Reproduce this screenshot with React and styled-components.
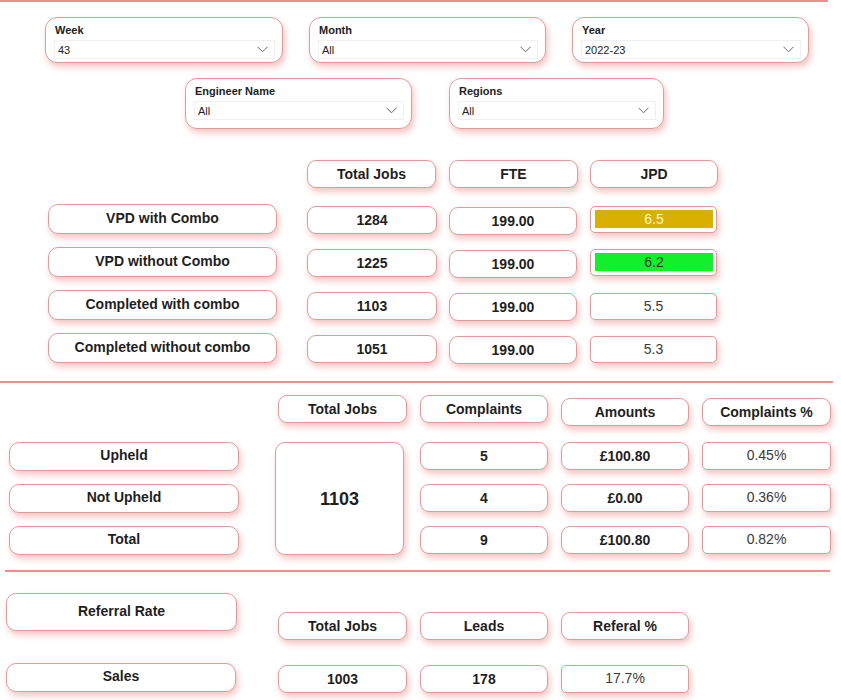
import React from 'react'
import styled, { createGlobalStyle, css } from 'styled-components'

const GlobalStyle = createGlobalStyle`
  body {
    margin: 0;
    background: #ffffff;
    font-family: "Liberation Sans", Arial, sans-serif;
    color: #1f1f1f;
  }
`

const pinkBox = css`
  background: #ffffff;
  border: 1px solid #e09a9a;
  box-shadow: 2px 4px 6px rgba(228, 110, 110, 0.4);
  box-sizing: border-box;
`

const Page = styled.div`
  width: 841px;
  height: 700px;
  overflow: hidden;
`

const Rule = styled.div`
  height: 0;
  border-top: 2px solid #ec8f8f;
  margin-left: ${p => p.$left || 0}px;
  margin-top: ${p => p.$top || 0}px;
  width: ${p => p.$width}px;
`

const SlicerRow = styled.div`
  display: flex;
  gap: ${p => p.$gap}px;
  padding-left: ${p => p.$left}px;
  margin-top: ${p => p.$top}px;
`

const Slicer = styled.div`
  ${pinkBox}
  width: ${p => p.$w}px;
  height: ${p => p.$h}px;
  border-radius: 12px;
  padding: 5px 7px 0 8px;
`

const SlicerLabel = styled.div`
  font-size: 11px;
  font-weight: bold;
  color: #222;
  padding-left: 1px;
  height: 17px;
  line-height: 14px;
`

const Dropdown = styled.div`
  display: flex;
  align-items: center;
  justify-content: space-between;
  height: 17px;
  border: 1px solid #f0f0f0;
  padding: 0 6px 0 3px;
  font-size: 11px;
  color: #252423;
`

const Chevron = () => (
  <svg width="11" height="7" viewBox="0 0 11 7">
    <path d="M0.5 0.8 L5.5 5.8 L10.5 0.8" fill="none" stroke="#666" strokeWidth="1" />
  </svg>
)

const Grid = styled.div`
  display: grid;
  grid-template-columns: ${p => p.$cols};
  grid-template-rows: ${p => p.$rows};
  column-gap: 13px;
  row-gap: ${p => p.$rowGap}px;
  padding-left: ${p => p.$left}px;
  margin-top: ${p => p.$top}px;
`

const Card = styled.div`
  ${pinkBox}
  display: flex;
  align-items: center;
  justify-content: center;
  width: ${p => p.$w || 129}px;
  height: ${p => p.$h || 28}px;
  margin-top: ${p => p.$dy || 0}px;
  margin-left: ${p => p.$dx || 0}px;
  border-radius: 9px;
  font-size: 14px;
  font-weight: bold;
  color: #1f1f1f;
  align-self: ${p => p.$align || 'start'};
`

const Label = styled(Card)`
  border-radius: 10px;
  padding-bottom: 3px;
`

const Plain = styled(Card)`
  font-weight: normal;
  color: #3a3a3a;
  border-radius: 5px;
  padding-bottom: 2px;
`

const Flag = styled(Card)`
  border-radius: 5px;
  padding: 3px 3px 4px 4px;
`

const Fill = styled.div`
  flex: 1;
  align-self: stretch;
  display: flex;
  align-items: center;
  justify-content: center;
  background: ${p => p.$bg};
  color: ${p => p.$fg};
  font-weight: normal;
  font-size: 14px;
  padding-bottom: 1px;
`

const BigCard = styled(Card)`
  grid-row: 2 / span 3;
  height: 113px;
  font-size: 18px;
  border-radius: 10px;
  padding-top: 2px;
`

const Blank = styled.div``

const slicers1 = [
  { label: 'Week', value: '43', w: 238 },
  { label: 'Month', value: 'All', w: 237 },
  { label: 'Year', value: '2022-23', w: 237 }
]

const slicers2 = [
  { label: 'Engineer Name', value: 'All', w: 227 },
  { label: 'Regions', value: 'All', w: 215 }
]

const vpdRows = [
  { name: 'VPD with Combo', jobs: '1284', fte: '199.00', jpd: '6.5', bg: '#d9b000', fg: '#fff6d0' },
  { name: 'VPD without Combo', jobs: '1225', fte: '199.00', jpd: '6.2', bg: '#12f02c', fg: '#1e3a1e' },
  { name: 'Completed with combo', jobs: '1103', fte: '199.00', jpd: '5.5' },
  { name: 'Completed without combo', jobs: '1051', fte: '199.00', jpd: '5.3' }
]

const complaintRows = [
  { name: 'Upheld', count: '5', amount: '£100.80', pct: '0.45%' },
  { name: 'Not Upheld', count: '4', amount: '£0.00', pct: '0.36%' },
  { name: 'Total', count: '9', amount: '£100.80', pct: '0.82%' }
]

export default function App() {
  return (
    <Page>
      <GlobalStyle />
      <Rule $width={828} />

      <SlicerRow $gap={26} $left={45} $top={15}>
        {slicers1.map(s => (
          <Slicer key={s.label} $w={s.w} $h={46}>
            <SlicerLabel>{s.label}</SlicerLabel>
            <Dropdown>
              <span>{s.value}</span>
              <Chevron />
            </Dropdown>
          </Slicer>
        ))}
      </SlicerRow>
      <SlicerRow $gap={37} $left={185} $top={15}>
        {slicers2.map(s => (
          <Slicer key={s.label} $w={s.w} $h={51}>
            <SlicerLabel>{s.label}</SlicerLabel>
            <Dropdown>
              <span>{s.value}</span>
              <Chevron />
            </Dropdown>
          </Slicer>
        ))}
      </SlicerRow>

      <Grid
        $cols="246px 129px 128px 128px"
        $rows="33px 29px 29px 29px 29px"
        $rowGap={14}
        $left={48}
        $top={31}
      >
        <Blank />
        <Card>Total Jobs</Card>
        <Card $w={129}>FTE</Card>
        <Card $w={128}>JPD</Card>
        {vpdRows.map(r => (
          <React.Fragment key={r.name}>
            <Label $w={229} $h={30} $dy={-3}>{r.name}</Label>
            <Card $w={130} $dy={-1}>{r.jobs}</Card>
            <Card $w={128}>{r.fte}</Card>
            {r.bg ? (
              <Flag $w={127} $h={27} $dy={-1}>
                <Fill $bg={r.bg} $fg={r.fg}>{r.jpd}</Fill>
              </Flag>
            ) : (
              <Plain $w={127} $h={27}>{r.jpd}</Plain>
            )}
          </React.Fragment>
        ))}
      </Grid>

      <Rule $width={833} $top={16} />

      <Grid
        $cols="256px 129px 128px 128px 129px"
        $rows="34px 29px 29px 29px"
        $rowGap={13}
        $left={9}
        $top={12}
      >
        <Blank />
        <Card>Total Jobs</Card>
        <Card $w={128}>Complaints</Card>
        <Card $w={128} $dy={3}>Amounts</Card>
        <Card $w={129} $dy={3}>Complaints %</Card>
        <BigCard $w={129} $dx={-3}>1103</BigCard>
        {complaintRows.map((r, i) => (
          <React.Fragment key={r.name}>
            <Label $w={230} $h={29} style={{ gridColumn: 1, gridRow: i + 2 }}>{r.name}</Label>
            <Card $w={128} style={{ gridColumn: 3, gridRow: i + 2 }}>{r.count}</Card>
            <Card $w={128} style={{ gridColumn: 4, gridRow: i + 2 }}>{r.amount}</Card>
            <Plain $w={129} $h={28} style={{ gridColumn: 5, gridRow: i + 2 }}>{r.pct}</Plain>
          </React.Fragment>
        ))}
      </Grid>

      <Rule $width={825} $left={5} $top={15} />

      <Grid
        $cols="259px 129px 128px 128px"
        $rows="47px 29px"
        $rowGap={25}
        $left={6}
        $top={21}
      >
        <Label $w={231} $h={38}>Referral Rate</Label>
        <Card $align="end">Total Jobs</Card>
        <Card $w={128} $align="end">Leads</Card>
        <Card $w={128} $align="end">Referal %</Card>
        <Label $w={230} $h={29} $dy={-2}>Sales</Label>
        <Card>1003</Card>
        <Card $w={128}>178</Card>
        <Plain $w={128} $h={28}>17.7%</Plain>
      </Grid>
    </Page>
  )
}
